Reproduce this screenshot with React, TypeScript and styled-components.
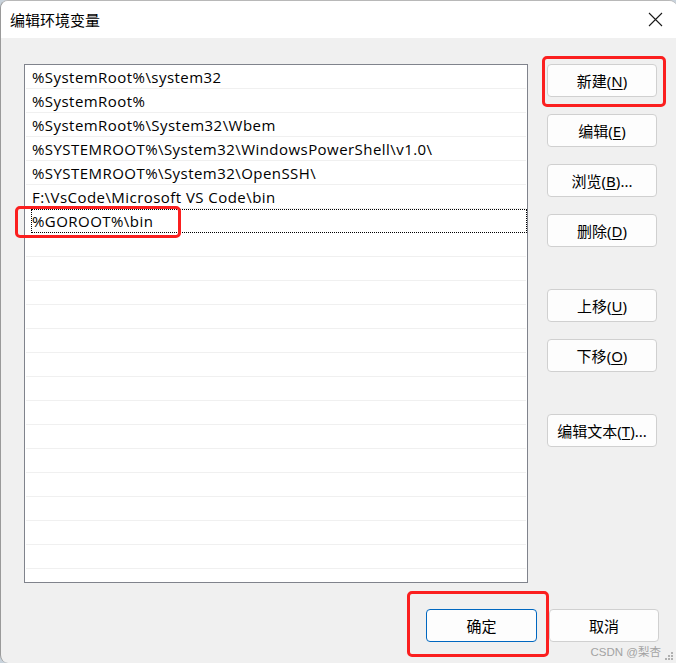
import * as React from "react";
import styled, { createGlobalStyle } from "styled-components";

const paths = [
    "%SystemRoot%\\system32",
    "%SystemRoot%",
    "%SystemRoot%\\System32\\Wbem",
    "%SYSTEMROOT%\\System32\\WindowsPowerShell\\v1.0\\",
    "%SYSTEMROOT%\\System32\\OpenSSH\\",
    "F:\\VsCode\\Microsoft VS Code\\bin",
    "%GOROOT%\\bin",
];

const TOTAL_ROWS = 22;
const FOCUSED = 6;

const GlobalStyle = createGlobalStyle`
    html, body {
        margin: 0;
        padding: 0;
        background: #c9d3dc;
        font-family: "Noto Sans", "Noto Sans CJK SC", sans-serif;
    }
`;

const Window = styled.div`
    position: relative;
    box-sizing: border-box;
    width: 677px;
    height: 663px;
    display: flex;
    flex-direction: column;
    background: #f0f0f0;
    border-left: 1px solid #9a9a9a;
    border-top: 1px solid #b8b8b8;
    border-radius: 8px 8px 0 8px;
    overflow: hidden;
`;

const TitleBar = styled.div`
    height: 37px;
    flex-shrink: 0;
    display: flex;
    align-items: center;
    justify-content: space-between;
    padding: 0 14px 0 9px;
    background: #ffffff;
`;

const Title = styled.span`
    font-family: "Noto Sans CJK SC", sans-serif;
    font-size: 15px;
    color: #000;
`;

const CloseButton = styled.div`
    display: flex;
    width: 16px;
    height: 16px;
    align-items: center;
    justify-content: center;
`;

const Body = styled.div`
    display: grid;
    grid-template-columns: 504px 110px;
    column-gap: 19px;
    padding: 26px 0 0 23px;
`;

const ListBox = styled.div`
    box-sizing: border-box;
    height: 519px;
    background: #ffffff;
    border: 1px solid #80838c;
    padding: 0 1px;
    overflow: hidden;
`;

const Row = styled.div<{ $focused?: boolean }>`
    position: relative;
    box-sizing: border-box;
    height: 24px;
    padding-left: 6px;
    display: flex;
    align-items: center;
    font-family: "Open Sans", "Noto Sans", sans-serif;
    font-size: 15px;
    letter-spacing: 0.45px;
    color: #000;
    white-space: nowrap;
    border-bottom: 1px solid ${p => (p.$focused ? "transparent" : "#f0f0f0")};
    &::before {
        content: "";
        display: ${p => (p.$focused ? "block" : "none")};
        position: absolute;
        left: 5px;
        right: -1px;
        top: 0;
        bottom: -1px;
        border: 1px dotted #000;
    }
`;

const SideButtons = styled.div`
    display: flex;
    flex-direction: column;
    gap: 17px;
`;

const Button = styled.button<{ $gapAbove?: number; $primary?: boolean; $width?: number }>`
    box-sizing: border-box;
    width: ${p => (p.$width ? `${p.$width}px` : "100%")};
    height: 33px;
    margin-top: ${p => p.$gapAbove ?? 0}px;
    padding: 0;
    background: #fdfdfd;
    border: 1px solid ${p => (p.$primary ? "#0067c0" : "#d0d0d0")};
    border-radius: 4px;
    font-family: "Noto Sans", "Noto Sans CJK SC", sans-serif;
    font-size: 15px;
    color: #000;
    display: flex;
    align-items: center;
    justify-content: center;
`;

const Key = styled.span`
    text-decoration: underline;
    text-underline-offset: 2px;
`;

const Footer = styled.div`
    display: flex;
    justify-content: flex-end;
    gap: 12px;
    padding: 26px 18px 0 0;
`;

const Highlight = styled.div<{ $x: number; $y: number; $w: number; $h: number }>`
    position: absolute;
    left: ${p => p.$x - 1}px;
    top: ${p => p.$y - 1}px;
    width: ${p => p.$w}px;
    height: ${p => p.$h}px;
    box-sizing: border-box;
    border: 3px solid #fb1f1f;
    border-radius: 5px;
    pointer-events: none;
`;

const Watermark = styled.span`
    position: absolute;
    right: 16px;
    bottom: 4px;
    font-family: "Liberation Sans", "Noto Sans CJK SC", sans-serif;
    font-size: 11.5px;
    color: #a3a3a3;
`;

const Grip = styled.svg`
    position: absolute;
    right: 3px;
    bottom: 2px;
`;

const Label: React.FC<{ text: string; hotkey?: string; tail?: string }> = ({ text, hotkey, tail }) => (
    <span>
        {text}
        {hotkey && (
            <>
                (<Key>{hotkey}</Key>)
            </>
        )}
        {tail}
    </span>
);

const App: React.FC = () => {
    const rows = Array.from({ length: TOTAL_ROWS }, (_, i) => paths[i] ?? "");
    return (
        <>
            <GlobalStyle />
            <Window>
                <TitleBar>
                    <Title>编辑环境变量</Title>
                    <CloseButton>
                        <svg width="15" height="15" viewBox="0 0 15 15">
                            <path d="M1 1 L14 14 M14 1 L1 14" stroke="#1a1a1a" strokeWidth="1.1" fill="none" />
                        </svg>
                    </CloseButton>
                </TitleBar>
                <Body>
                    <ListBox>
                        {rows.map((r, i) => (
                            <Row key={i} $focused={i === FOCUSED}>
                                {r}
                            </Row>
                        ))}
                    </ListBox>
                    <SideButtons>
                        <Button>
                            <Label text="新建" hotkey="N" />
                        </Button>
                        <Button>
                            <Label text="编辑" hotkey="E" />
                        </Button>
                        <Button>
                            <Label text="浏览" hotkey="B" tail="..." />
                        </Button>
                        <Button>
                            <Label text="删除" hotkey="D" />
                        </Button>
                        <Button $gapAbove={25}>
                            <Label text="上移" hotkey="U" />
                        </Button>
                        <Button>
                            <Label text="下移" hotkey="O" />
                        </Button>
                        <Button $gapAbove={25}>
                            <Label text="编辑文本" hotkey="T" tail="..." />
                        </Button>
                    </SideButtons>
                </Body>
                <Footer>
                    <Button $primary $width={111}>
                        确定
                    </Button>
                    <Button $width={110}>取消</Button>
                </Footer>

                <Highlight $x={542} $y={56} $w={124} $h={51} />
                <Highlight $x={15} $y={206} $w={166} $h={32} />
                <Highlight $x={407} $y={591} $w={142} $h={66} />

                <Watermark>CSDN @梨杏</Watermark>
                <Grip width="10" height="10" viewBox="0 0 10 10">
                    <rect x="7" y="1" width="2" height="2" fill="#b0b0b0" />
                    <rect x="4" y="4" width="2" height="2" fill="#b0b0b0" />
                    <rect x="7" y="4" width="2" height="2" fill="#b0b0b0" />
                    <rect x="1" y="7" width="2" height="2" fill="#b0b0b0" />
                    <rect x="4" y="7" width="2" height="2" fill="#b0b0b0" />
                    <rect x="7" y="7" width="2" height="2" fill="#b0b0b0" />
                </Grip>
            </Window>
        </>
    );
};

export default App;
